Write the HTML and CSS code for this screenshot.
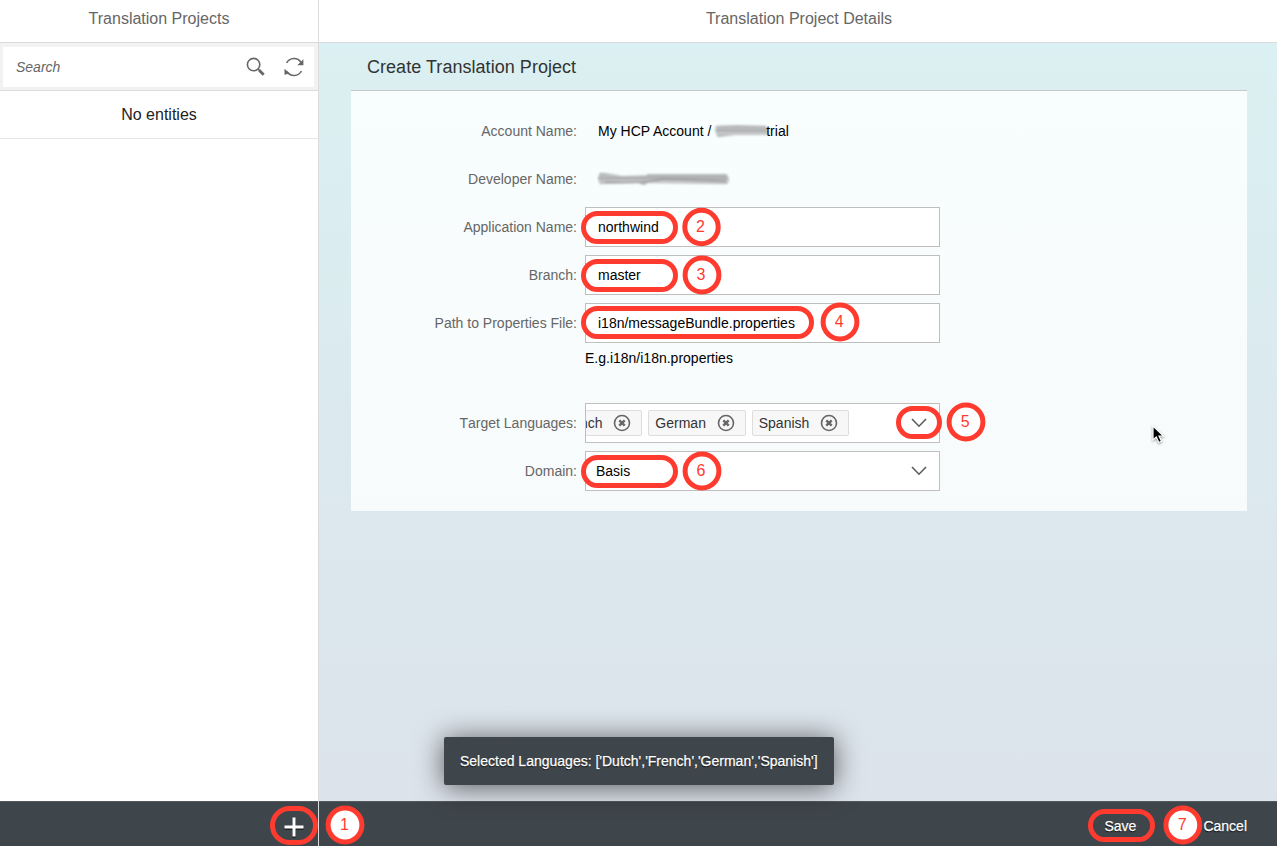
FILE: index.html
```html
<!DOCTYPE html>
<html lang="en">
<head>
<meta charset="utf-8">
<title>Translation Projects</title>
<link rel="stylesheet" href="styles.css">
</head>
<body>
<div class="app">
  <aside class="master">
    <header class="bar"><h1 class="bar-title">Translation Projects</h1></header>
    <div class="search">
      <div class="search-box">
        <span class="search-text">Search</span>
        <svg class="search-icon" width="20" height="20" viewBox="0 0 20 20"><circle cx="7.6" cy="7.6" r="6.2" fill="none" stroke="#666" stroke-width="1.6"/><path d="M12 12l1.7 1.6" stroke="#666" stroke-width="1.6"/><path d="M13.2 13.2l4.5 4.5" stroke="#666" stroke-width="2.8"/></svg>
        <svg class="refresh-icon" width="20" height="20" viewBox="0 0 20 20"><path d="M2.6 6A8.3 8.3 0 0 1 16.9 5.2M17.4 14A8.3 8.3 0 0 1 3.1 14.8" fill="none" stroke="#666" stroke-width="1.6"/><path d="M19.4 2.2v6h-6.1zM.5 17.8v-6l5.3 4.6z" fill="#666"/></svg>
      </div>
    </div>
    <div class="empty">No entities</div>
    <footer class="footer master-footer">
      <svg class="plus" width="20" height="21" viewBox="0 0 20 21"><path d="M8.5 1.8h3v8h8v3h-8v8h-3v-8h-8v-3h8z" fill="#15191b"/><path d="M8.5.5h3v8h8v3h-8v8h-3v-8h-8v-3h8z" fill="#fff"/></svg>
    </footer>
  </aside>
  <main class="detail">
    <header class="bar"><h1 class="bar-title details-title">Translation Project Details</h1></header>
    <section class="content">
      <h2 class="form-title">Create Translation Project</h2>
      <div class="form">
        <div class="row"><label class="label">Account Name:</label><div class="value">My HCP Account / <svg class="smudge" width="58" height="18" viewBox="0 0 58 18"><defs><linearGradient id="streak" x1="0" y1="0" x2="0" y2="1"><stop offset="0" stop-color="#8d8f91"/><stop offset=".22" stop-color="#c9cbcc"/><stop offset=".42" stop-color="#a4a6a8"/><stop offset=".65" stop-color="#cdcfd0"/><stop offset="1" stop-color="#a3a5a7"/></linearGradient></defs><g class="soft"><path d="M3 4Q20 3 53 4q3 5 2 9L22 13 5 15q-4-5-2-11z" fill="url(#streak)"/></g></svg>trial</div></div>
        <div class="row"><label class="label">Developer Name:</label><div class="value"><svg class="smudge-long" width="134" height="18" viewBox="0 0 134 18"><g class="soft"><path d="M3 3q14 1 22 3l26-1 79 0q4 5 0 9l-79-1-4 2-6-2-38 1Q-1 9 3 3z" fill="url(#streak)"/><path d="M50 5l80 0M8 12q40 2 58-3l63 2" fill="none" stroke="#85878a" stroke-width="1"/></g></svg></div></div>
        <div class="row"><label class="label">Application Name:</label><div class="field">northwind</div></div>
        <div class="row"><label class="label">Branch:</label><div class="field">master</div></div>
        <div class="row"><label class="label">Path to Properties File:</label><div class="field">i18n/messageBundle.properties</div></div>
        <div class="hint">E.g.i18n/i18n.properties</div>
        <div class="row"><label class="label label-languages">Target Languages:</label>
          <div class="field tokens">
            <span class="token token-first"><span>nch</span><svg class="remove" width="18" height="18" viewBox="0 0 18 18"><circle cx="9" cy="9" r="7.5"/><path d="M6.3 6.3l5.4 5.4M11.7 6.3l-5.4 5.4"/></svg></span>
            <span class="token"><span>German</span><svg class="remove" width="18" height="18" viewBox="0 0 18 18"><circle cx="9" cy="9" r="7.5"/><path d="M6.3 6.3l5.4 5.4M11.7 6.3l-5.4 5.4"/></svg></span>
            <span class="token"><span>Spanish</span><svg class="remove" width="18" height="18" viewBox="0 0 18 18"><circle cx="9" cy="9" r="7.5"/><path d="M6.3 6.3l5.4 5.4M11.7 6.3l-5.4 5.4"/></svg></span>
            <svg class="chevron" width="16" height="10" viewBox="0 0 16 10"><path d="M1 1l7 7.2L15 1"/></svg>
          </div>
        </div>
        <div class="row"><label class="label">Domain:</label><div class="field select"><span>Basis</span><svg class="chevron" width="16" height="10" viewBox="0 0 16 10"><path d="M1 1l7 7.2L15 1"/></svg></div></div>
      </div>
    </section>
    <footer class="footer detail-footer"><span>Save</span><span>Cancel</span></footer>
  </main>
</div>
<div class="toast">Selected Languages: ['Dutch','French','German','Spanish']</div>
<svg class="callouts" width="1277" height="846" viewBox="0 0 1277 846">
  <g class="ring">
    <rect x="583.5" y="213.5" width="92" height="28" rx="14"/>
    <rect x="583.5" y="261.5" width="92" height="28" rx="14"/>
    <rect x="583.5" y="308.5" width="228" height="28" rx="14"/>
    <rect x="898.5" y="408.5" width="41" height="28" rx="14"/>
    <rect x="583.5" y="457.5" width="92" height="28" rx="14"/>
    <rect x="272.5" y="808.5" width="43" height="34" rx="17"/>
    <rect x="1090.5" y="811.5" width="62" height="28" rx="14"/>
  </g>
  <g class="ring disc">
    <circle cx="701.5" cy="227" r="16.7"/>
    <circle cx="702" cy="275" r="16.9"/>
    <circle cx="840" cy="322" r="16.9"/>
    <circle cx="966" cy="422" r="16.9"/>
    <circle cx="702" cy="471" r="16.9"/>
    <circle cx="345" cy="825" r="16.9"/>
    <circle cx="1182.8" cy="825" r="16.9"/>
  </g>
  <g class="number">
    <text x="700.5" y="232">2</text>
    <text x="701" y="280">3</text>
    <text x="839.3" y="327">4</text>
    <text x="965.3" y="427">5</text>
    <text x="701" y="476">6</text>
    <text x="344.5" y="830">1</text>
    <text x="1182.3" y="830">7</text>
  </g>
</svg>
<svg class="pointer" width="16" height="22" viewBox="0 0 16 22"><path d="M2 1v14l3.3-3 2.5 5.5 2.7-1.2L8 11h4.5z" fill="#000" stroke="#fff" stroke-width="1.2"/></svg>
</body>
</html>
```
FILE: styles.css
```css
* { box-sizing: border-box; }
body {
  margin: 0;
  width: 1277px;
  height: 846px;
  overflow: hidden;
  position: relative;
  background: #fff;
  color: #000;
  font: 14px/20px "Liberation Sans", Arial, sans-serif;
}
svg { flex: none; }
.app { display: flex; height: 846px; }
.master {
  width: 319px;
  display: flex;
  flex-direction: column;
  border-right: 1px solid #dcdcdc;
}
.detail { flex: 1; display: flex; flex-direction: column; }
.bar {
  height: 43px;
  padding-top: 9px;
  border-bottom: 1px solid #dbdbdb;
  background: #fff;
}
.bar-title {
  margin: 0;
  font-size: 16px;
  font-weight: 400;
  line-height: 20px;
  text-align: center;
  color: #666;
}
.details-title { padding-left: 2px; }
.search {
  height: 48px;
  padding: 4px 4px 3px 3px;
  background: #f2f2f2;
  border-bottom: 1px solid #dcdcdc;
}
.search-box {
  height: 40px;
  display: flex;
  align-items: center;
  padding: 0 10px 0 13px;
  background: #fff;
}
.search-text { flex: 1; font-style: italic; color: #666; }
.refresh-icon { margin-left: 18px; }
.empty {
  height: 48px;
  display: flex;
  align-items: center;
  justify-content: center;
  border-bottom: 1px solid #e5e5e5;
  color: #222;
  font-size: 16px;
}
.footer {
  height: 45px;
  margin-top: auto;
  display: flex;
  align-items: center;
  justify-content: flex-end;
  background: #3e454b;
  border-top: 1px solid #535a5d;
  color: #fff;
  text-shadow: 0 1px 1px #000;
  -webkit-text-stroke: .25px #fff;
}
.master-footer { padding: 6px 14px 0 0; }
.detail-footer { padding: 4px 30px 0 0; gap: 67px; }
.content {
  flex: 1;
  padding: 0 30px 0 32px;
  background: linear-gradient(180deg, #dbf0f2 0%, #dce3eb 100%);
}
.form-title {
  height: 48px;
  margin: 0;
  padding: 14px 16px 0;
  border-bottom: 1px solid #c4caca;
  font-size: 18px;
  font-weight: 400;
  line-height: 20px;
  letter-spacing: .04px;
  color: #333;
}
.form {
  height: 420px;
  padding-top: 16px;
  background: linear-gradient(180deg, #f8fdfd, #f8fbfc);
}
.row { height: 48px; display: flex; align-items: center; }
.label { width: 226px; margin-right: 8px; text-align: right; color: #666; }
.label-languages { font-kerning: none; }
.value { display: flex; align-items: center; padding-left: 13px; white-space: pre; }
.smudge { margin: 0 -5px 0 -2px; }
.smudge-long { margin-left: -1px; }
.soft { filter: blur(.8px); }
.field {
  width: 355px;
  height: 40px;
  display: flex;
  align-items: center;
  padding: 0 12px;
  border: 1px solid #bfbfbf;
  background: #fff;
}
.hint { height: 52px; padding: 1px 0 0 234px; }
.tokens { padding-left: 0; overflow: hidden; }
.token {
  flex: none;
  height: 26px;
  display: flex;
  align-items: center;
  gap: 10.6px;
  margin-right: 6px;
  padding: 0 10px 0 6.2px;
  border: 1px solid #ddd;
  border-radius: 2px;
  background: #f7f7f7;
  color: #333;
}
.token-first { margin-left: -13.2px; }
.remove { fill: none; stroke: #666; stroke-width: 1.6; }
.remove path { stroke-width: 2.4; }
.chevron { margin-left: auto; fill: none; stroke: #5b5b5b; stroke-width: 1.6; }
.tokens .chevron { margin-right: 0; }
.select { padding-left: 10px; }
.toast {
  position: absolute;
  left: 444px;
  top: 737px;
  width: 390px;
  height: 48px;
  display: flex;
  align-items: center;
  padding-left: 16px;
  border-radius: 2px;
  background: #3e454b;
  box-shadow: 0 2px 28px rgba(0, 0, 0, .62);
  color: #fff;
  white-space: nowrap;
  text-shadow: 0 1px 1px #000;
  -webkit-text-stroke: .25px #fff;
}
.callouts { position: absolute; left: 0; top: 0; pointer-events: none; }
.ring { fill: none; stroke: #ff3b30; stroke-width: 5; }
.disc { fill: #fff; }
.number { fill: #ff3b30; font-size: 16px; text-anchor: middle; }
.pointer {
  position: absolute;
  left: 1151px;
  top: 425px;
  filter: drop-shadow(0 1px 1px rgba(0, 0, 0, .4));
}
```
